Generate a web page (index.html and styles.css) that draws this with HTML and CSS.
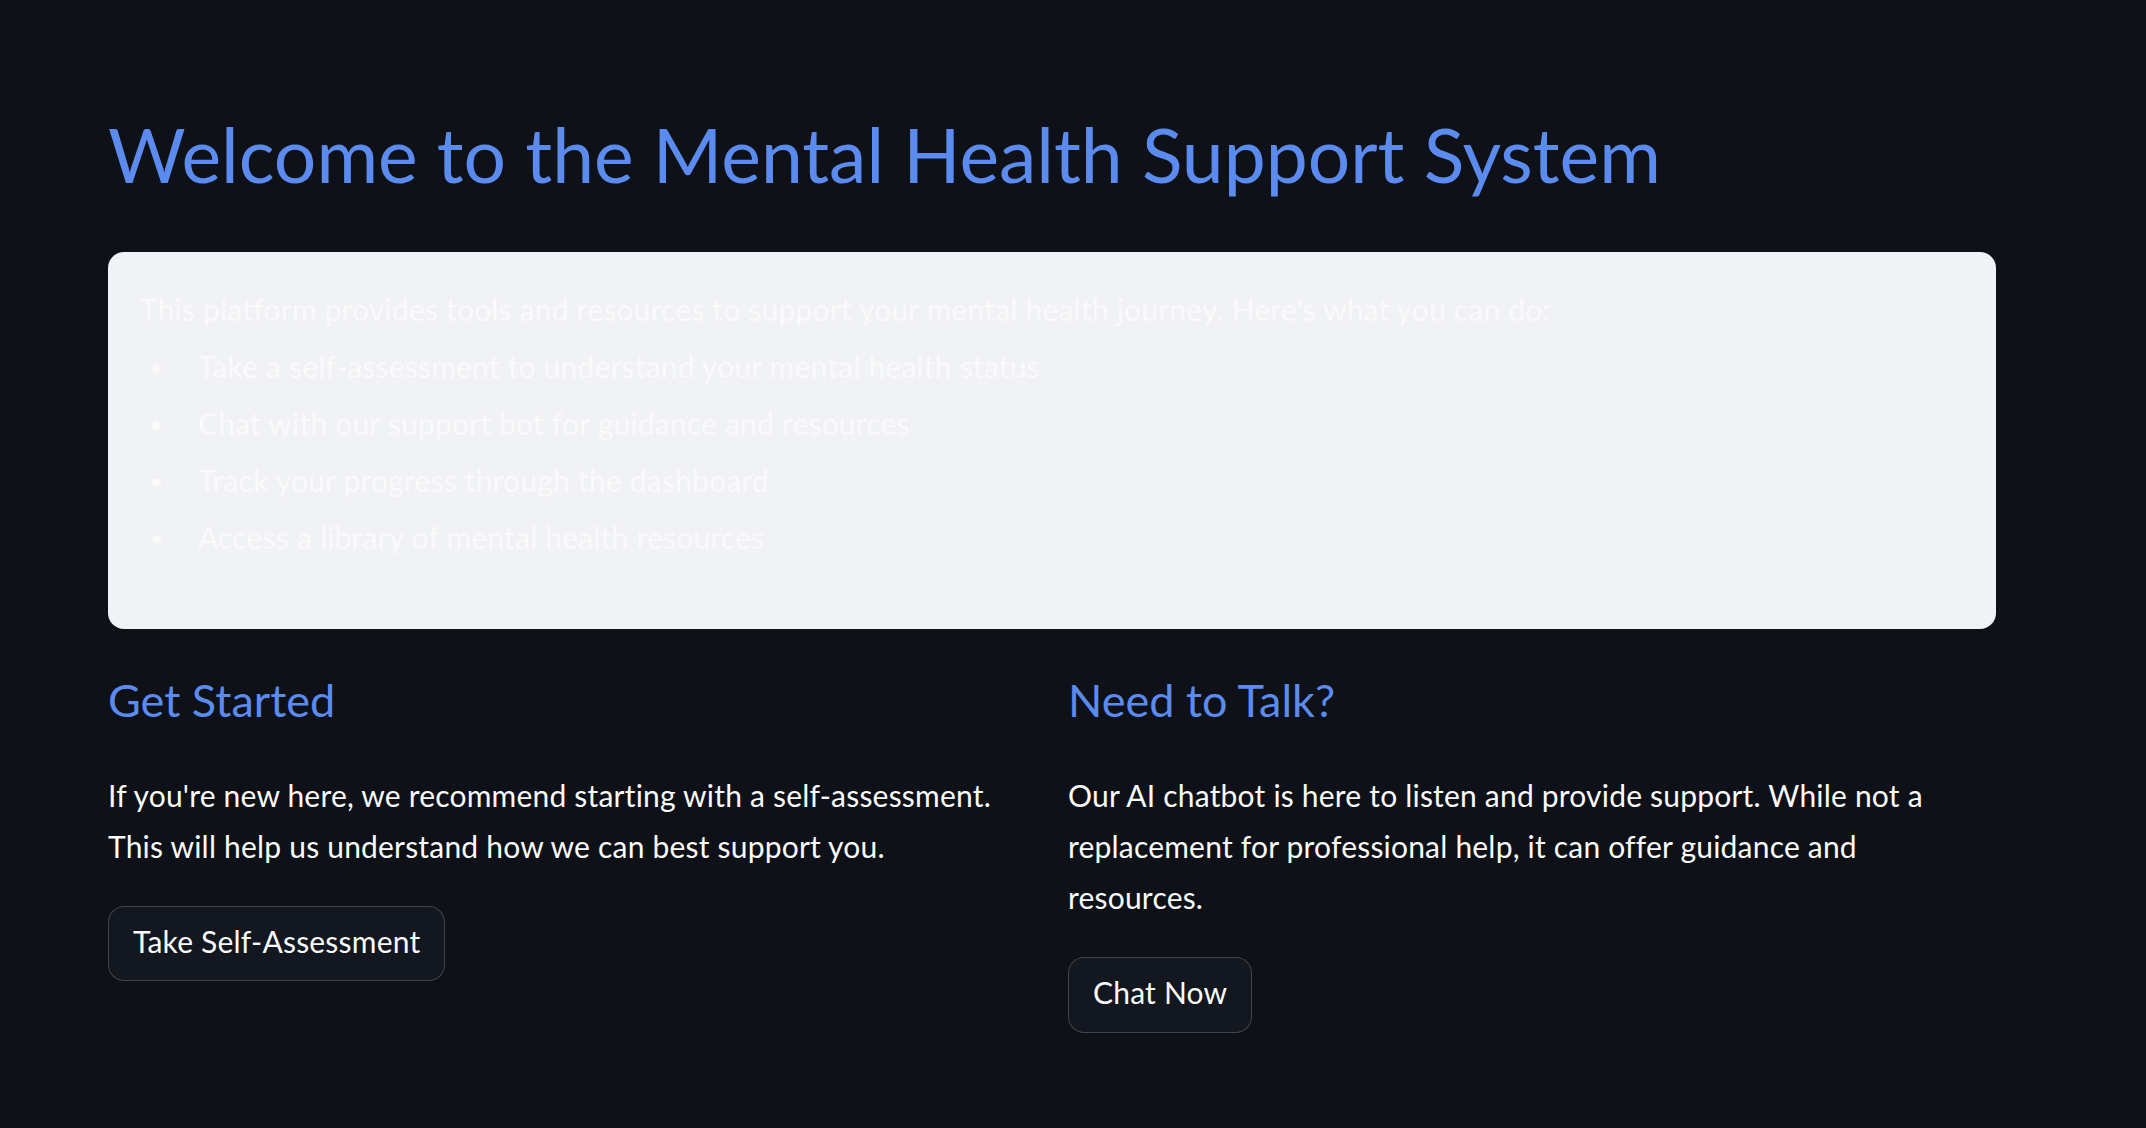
FILE: index.html
```html
<!DOCTYPE html>
<html lang="en">
<head>
<meta charset="utf-8">
<title>Mental Health Support System</title>
<link rel="stylesheet" href="styles.css">
</head>
<body>
<main class="page">
  <h1 class="title">Welcome to the Mental Health Support System</h1>
  <section class="intro">
    <p class="intro-text">This platform provides tools and resources to support your mental health journey. Here's what you can do:</p>
    <ul class="intro-list">
      <li>Take a self-assessment to understand your mental health status</li>
      <li>Chat with our support bot for guidance and resources</li>
      <li>Track your progress through the dashboard</li>
      <li>Access a library of mental health resources</li>
    </ul>
  </section>
  <div class="columns">
    <section class="col">
      <h2 class="col-title">Get Started</h2>
      <p class="col-text">If you're new here, we recommend starting with a self-assessment. This will help us understand how we can best support you.</p>
      <button class="btn" type="button">Take Self-Assessment</button>
    </section>
    <section class="col">
      <h2 class="col-title">Need to Talk?</h2>
      <p class="col-text">Our AI chatbot is here to listen and provide support. While not a replacement for professional help, it can offer guidance and resources.</p>
      <button class="btn" type="button">Chat Now</button>
    </section>
  </div>
</main>
</body>
</html>
```

FILE: styles.css
```css
* {
  box-sizing: border-box;
}

html, body {
  margin: 0;
  padding: 0;
  background: #0e1117;
}

body {
  font-family: "Lato", "Liberation Sans", sans-serif;
  color: #fafafa;
  font-size: 30px;
  line-height: 51.2px;
  letter-spacing: 0.2px;
}

.page {
  width: 1888px;
  margin-left: 108px;
  padding-top: 109px;
}

.title {
  margin: 0;
  font-size: 75px;
  line-height: 90px;
  font-weight: 400;
  letter-spacing: 0;
  color: #5b8bef;
}

.intro {
  margin-top: 53px;
  background: #f0f2f6;
  border-radius: 16px;
  padding: 32px;
  color: #fafafa;
}

.intro-text {
  margin: 0;
}

.intro-list {
  list-style: none;
  margin: 0 0 34px 0;
  padding: 0;
}

.intro-list li {
  display: flex;
  align-items: flex-start;
  margin-top: 5.8px;
}

.intro-list li::before {
  content: "";
  flex: none;
  width: 9px;
  height: 9px;
  border-radius: 50%;
  background: #fafafa;
  margin: 23px 37px 0 12px;
}

.columns {
  display: grid;
  grid-template-columns: 1fr 1fr;
  column-gap: 32px;
  margin-top: 43.6px;
}

.col {
  display: flex;
  flex-direction: column;
  align-items: flex-start;
}

.col-title {
  margin: 0;
  font-size: 45px;
  line-height: 54px;
  font-weight: 400;
  letter-spacing: 0;
  color: #5b8bef;
}

.col-text {
  margin: 43.2px 0 0 0;
  max-width: 905px;
}

.btn {
  margin-top: 33.8px;
  font-family: inherit;
  font-size: 30px;
  line-height: 51.2px;
  letter-spacing: 0.2px;
  color: #fafafa;
  background: #131720;
  border: 1px solid rgba(250, 250, 250, 0.2);
  border-radius: 16px;
  padding: 9px 24px 13px 24px;
  cursor: pointer;
}
```
